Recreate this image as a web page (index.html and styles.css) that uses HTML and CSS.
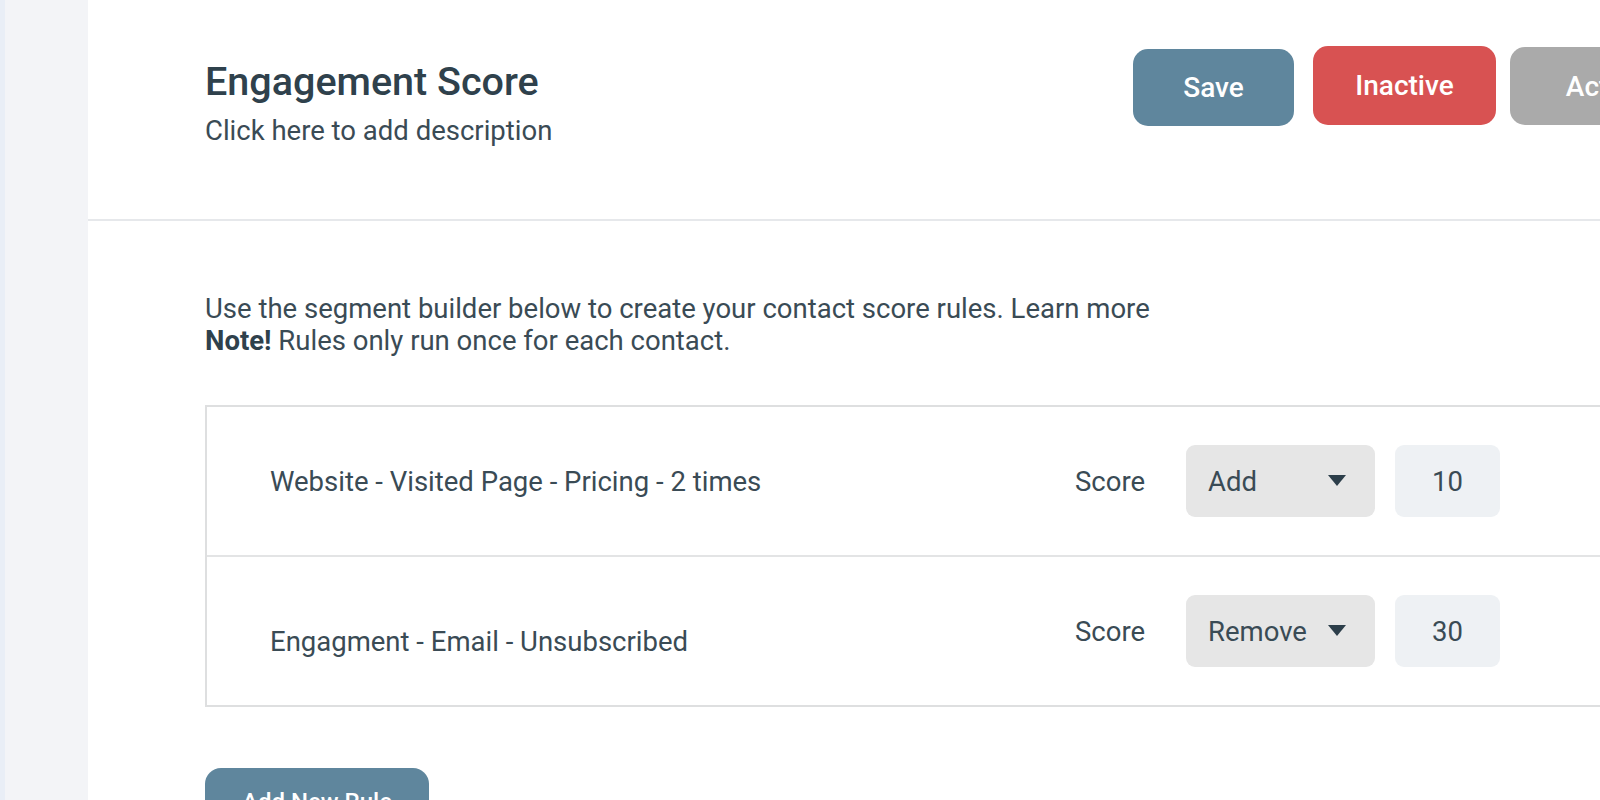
FILE: index.html
```html
<!DOCTYPE html>
<html>
<head>
<meta charset="utf-8">
<link rel="stylesheet" href="styles.css">
</head>
<body>
<div class="app">
  <aside class="sidebar"></aside>
  <main class="main">
    <header class="header">
      <div class="title-block">
        <h1 class="title">Engagement Score</h1>
        <p class="desc">Click here to add description</p>
      </div>
      <div class="actions">
        <button class="btn btn-save">Save</button>
        <button class="btn btn-inactive">Inactive</button>
        <button class="btn btn-active">Active</button>
      </div>
    </header>
    <section class="content">
      <p class="intro">Use the segment builder below to create your contact score rules. Learn more<br><strong>Note!</strong> Rules only run once for each contact.</p>
      <div class="rules">
        <div class="rule">
          <div class="rule-label">Website - Visited Page - Pricing - 2 times</div>
          <div class="score-label">Score</div>
          <div class="select"><span>Add</span><span class="caret"></span></div>
          <div class="num">10</div>
        </div>
        <div class="rule">
          <div class="rule-label low">Engagment - Email - Unsubscribed</div>
          <div class="score-label">Score</div>
          <div class="select"><span>Remove</span><span class="caret"></span></div>
          <div class="num">30</div>
        </div>
      </div>
      <button class="btn btn-add">Add New Rule</button>
    </section>
  </main>
</div>
</body>
</html>
```

FILE: styles.css
```css
* { box-sizing: border-box; }
html, body {
  margin: 0;
  padding: 0;
  width: 1600px;
  height: 800px;
  overflow: hidden;
  background: #ffffff;
  font-family: Roboto, "Liberation Sans", sans-serif;
  color: #35474f;
}
.app {
  display: flex;
  width: 1600px;
  height: 800px;
}
.sidebar {
  flex: 0 0 88px;
  background: #f3f4f7;
  border-left: 5px solid #e9eef6;
}
.main {
  flex: 1;
  min-width: 0;
  overflow: hidden;
  background: #fff;
}
.header {
  display: flex;
  align-items: flex-start;
  height: 221px;
  padding-left: 117px;
  border-bottom: 2px solid #e6e8eb;
}
.title-block {
  flex: 0 0 928px;
  padding-top: 58px;
}
.title {
  margin: 0;
  font-size: 39.5px;
  line-height: 48px;
  font-weight: 500;
  color: #2f414c;
}
.desc {
  margin: 7px 0 0;
  font-size: 27.5px;
  line-height: 36px;
  color: #3a4b55;
}
.actions {
  display: flex;
  flex: none;
  align-items: flex-start;
  padding-top: 46px;
}
.btn {
  border: none;
  color: #fff;
  font-family: Roboto, "Liberation Sans", sans-serif;
  font-weight: 500;
  font-size: 28px;
  border-radius: 15px;
  padding: 0;
}
.btn-save {
  width: 161px;
  height: 77px;
  margin-top: 3px;
  background: #5f869d;
}
.btn-inactive {
  width: 183px;
  height: 79px;
  margin-left: 19px;
  background: #d85252;
}
.btn-active {
  width: 190px;
  height: 78px;
  margin-top: 1px;
  margin-left: 14px;
  background: #aaaaaa;
}
.content {
  padding: 72px 0 0 117px;
}
.intro {
  margin: 0;
  font-size: 27.5px;
  line-height: 31.5px;
  color: #3a4b55;
}
.intro strong {
  font-weight: 700;
  color: #2f414c;
}
.rules {
  margin-top: 49px;
  width: 1500px;
  border: 2px solid #dedfe0;
}
.rule {
  display: flex;
  align-items: center;
  height: 148px;
  padding-left: 63px;
}
.rule + .rule {
  border-top: 2px solid #e3e4e5;
  height: 150px;
}
.rule-label {
  flex: 0 0 805px;
  font-size: 27.5px;
  color: #3a4b55;
}
.rule-label.low {
  padding-top: 20px;
}
.score-label {
  flex: 0 0 111px;
  font-size: 27.5px;
  color: #3a4b55;
}
.select {
  display: flex;
  align-items: center;
  justify-content: space-between;
  flex: 0 0 189px;
  height: 72px;
  padding: 0 29px 0 22px;
  background: #e6e6e6;
  border-radius: 9px;
  font-size: 27.5px;
  color: #3a4b55;
}
.caret {
  width: 0;
  height: 0;
  border-left: 9.5px solid transparent;
  border-right: 9.5px solid transparent;
  border-top: 11px solid #2c3e4a;
  margin-top: -2px;
}
.num {
  display: flex;
  align-items: center;
  justify-content: center;
  flex: 0 0 105px;
  height: 72px;
  margin-left: 20px;
  background: #eef1f4;
  border-radius: 9px;
  font-size: 27.5px;
  color: #3a4b55;
}
.btn-add {
  display: block;
  margin-top: 61px;
  width: 224px;
  height: 68px;
  background: #5f869d;
  border-radius: 16px;
  font-size: 24px;
}
```
